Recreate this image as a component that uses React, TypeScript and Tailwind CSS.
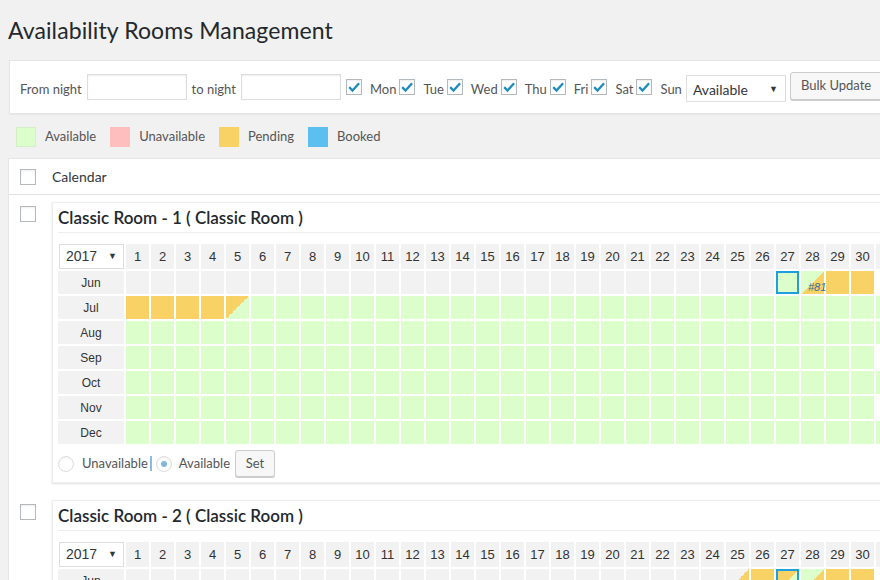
import { ReactNode } from "react";

type Cell = "past" | "free" | "pend" | "pf" | "fp" | "gp" | "none";

const cellBg: Record<Cell, string> = {
  past: "bg-[#f2f2f2]",
  free: "bg-[#dcfecb]",
  pend: "bg-[#f9d265]",
  pf: "bg-[linear-gradient(to_bottom_right,#f9d265_50%,#dcfecb_50%)]",
  fp: "bg-[linear-gradient(to_bottom_right,#dcfecb_50%,#f9d265_50%)]",
  gp: "bg-[linear-gradient(to_bottom_right,#f2f2f2_50%,#f9d265_50%)]",
  none: "bg-white",
};

const months: [string, number][] = [
  ["Jun", 30],
  ["Jul", 31],
  ["Aug", 31],
  ["Sep", 30],
  ["Oct", 31],
  ["Nov", 30],
  ["Dec", 31],
];

const days = Array.from({ length: 31 }, (_, i) => i + 1);

type Special = { type: Cell; today?: boolean; label?: string };

const room1: Record<string, Record<number, Special>> = {
  Jun: {
    27: { type: "free", today: true },
    28: { type: "fp", label: "#81" },
    29: { type: "pend" },
    30: { type: "pend" },
  },
  Jul: {
    1: { type: "pend" },
    2: { type: "pend" },
    3: { type: "pend" },
    4: { type: "pend" },
    5: { type: "pf" },
  },
};

const room2: Record<string, Record<number, Special>> = {
  Jun: {
    25: { type: "gp", label: "#80" },
    26: { type: "pend" },
    27: { type: "pf", today: true },
    28: { type: "fp", label: "#82" },
    29: { type: "pend" },
    30: { type: "pend" },
  },
  Jul: {
    1: { type: "pend" },
    2: { type: "pend" },
    3: { type: "pf" },
  },
};

const Checkbox = ({ checked }: { checked?: boolean }) => (
  <span className="w-4 h-4 shrink-0 border border-[#b4b9be] bg-white shadow-[inset_0_1px_2px_rgba(0,0,0,0.07)] flex items-center justify-center">
    {checked && (
      <svg width="14" height="14" viewBox="0 0 16 16">
        <path d="M2.5 8.2 L6.3 12 L13.8 3.6" fill="none" stroke="#1e8cbe" strokeWidth="2.6" />
      </svg>
    )}
  </span>
);

const Radio = ({ checked }: { checked?: boolean }) => (
  <span className="w-4 h-4 rounded-full border border-[#dcdcdc] bg-white shadow-[inset_0_1px_2px_rgba(0,0,0,0.06)] flex items-center justify-center">
    {checked && <span className="w-[6px] h-[6px] rounded-full bg-[#7eb9d8]" />}
  </span>
);

const Grid = ({ data }: { data: Record<string, Record<number, Special>> }) => (
  <div className="grid grid-cols-[66px_repeat(31,23px)] grid-rows-[25px_repeat(7,23px)] gap-[2px] font-['Liberation_Sans',Arial,sans-serif] text-[13px] text-[#333]">
    <div className="ml-[1px] h-[25px] bg-white border border-[#ddd] flex items-center justify-between pl-[6px] pr-[6px] text-[14px] text-[#32373c]">
      <span>2017</span>
      <span className="text-[9px]">▼</span>
    </div>
    {days.map((d) => (
      <div key={d} className="bg-[#f2f2f2] flex items-center justify-center">
        {d}
      </div>
    ))}
    {months.map(([m, len]) => {
      const row = data[m] || {};
      return [
        <div key={m} className="bg-[#f2f2f2] flex items-center justify-center text-[12px]">
          {m}
        </div>,
        ...days.map((d) => {
          const sp = row[d];
          let type: Cell = m === "Jun" ? "past" : "free";
          if (d > len) type = "none";
          if (sp) type = sp.type;
          return (
            <div
              key={m + d}
              className={`relative ${cellBg[type]} ${sp?.today ? "border-2 border-[#1e9fe0]" : ""}`}
            >
              {sp?.label && (
                <span className="absolute left-[7px] top-[8px] text-[11px] italic text-[#2f6f9c] whitespace-nowrap">
                  {sp.label}
                </span>
              )}
            </div>
          );
        }),
      ];
    })}
  </div>
);

const RoomRow = ({
  title,
  data,
}: {
  title: string;
  data: Record<string, Record<number, Special>>;
}) => (
  <div className="flex pt-[7px] pb-[10px]">
    <div className="w-[43px] shrink-0 pl-[11px] pt-[4px]">
      <Checkbox />
    </div>
    <div className="flex-1 bg-white shadow-[0_1px_2px_rgba(0,0,0,0.12)] border border-[#eee] px-[5px] pt-[4px] pb-[5px]">
      <div className="text-[17px] leading-[22px] font-semibold text-[#23282d] pb-[3px] border-b border-[#eee]">
        {title}
      </div>
      <div className="mt-[11px]">
        <Grid data={data} />
      </div>
      <div className="flex items-center mt-[6px] text-[13px] text-[#555]">
        <Radio />
        <span className="ml-[8px]">Unavailable</span>
        <span className="ml-[2px] w-[2px] h-[15px] bg-[#8cbbe0]" />
        <span className="ml-[4px]">
          <Radio checked />
        </span>
        <span className="ml-[7px]">Available</span>
        <button className="ml-[5px] h-[27px] w-[40px] bg-[#f7f7f7] border border-[#ccc] rounded-[3px] shadow-[0_1px_0_#ccc] text-[13px] text-[#555]">
          Set
        </button>
      </div>
    </div>
  </div>
);

const Legend = ({ color, children }: { color: string; children: ReactNode }) => (
  <div className="flex items-center mr-[14px]">
    <span className={`w-5 h-5 ${color}`} />
    <span className="ml-[9px]">{children}</span>
  </div>
);

const dayNames = ["Mon", "Tue", "Wed", "Thu", "Fri", "Sat", "Sun"];

export default function App() {
  return (
    <div className="w-[880px] h-[580px] overflow-hidden bg-[#f1f1f1] font-['Lato','Noto_Sans',sans-serif] text-[#444]">
      <div className="pl-[8px] pt-[16px] w-[920px]">
        <h1 className="text-[23px] leading-[29px] text-[#23282d] font-normal tracking-[0.1px]">
          Availability Rooms Management
        </h1>

        <div className="mt-[15px] ml-[1px] h-[54px] bg-white border border-[#e5e5e5] shadow-[0_1px_1px_rgba(0,0,0,0.04)] flex items-center pl-[10px] text-[13px] text-[#555]">
          <span className="pt-[5px]">From night</span>
          <input className="ml-[5px] w-[100px] h-[26px] border border-[#ddd] bg-white shadow-[inset_0_1px_2px_rgba(0,0,0,0.07)]" />
          <span className="ml-[5px] pt-[5px]">to night</span>
          <input className="ml-[5px] w-[100px] h-[26px] border border-[#ddd] bg-white shadow-[inset_0_1px_2px_rgba(0,0,0,0.07)]" />
          <div className="flex items-center ml-[5px]">
            {dayNames.map((d) => (
              <div key={d} className="flex items-center">
                <Checkbox checked />
                <span className="ml-[8px] mr-[3px] pt-[5px]">{d}</span>
              </div>
            ))}
          </div>
          <div className="ml-[1px] mt-[3px] w-[100px] h-[27px] border border-[#ddd] bg-white flex items-center justify-between pl-[6px] pr-[7px] text-[14px] text-[#32373c]">
            <span className="pt-[2px]">Available</span>
            <span className="text-[9px]">▼</span>
          </div>
          <button className="ml-[4px] -mt-[3px] h-[28px] px-[10px] bg-[#f7f7f7] border border-[#ccc] rounded-[3px] shadow-[0_1px_0_#ccc] text-[13px] text-[#555]">
            Bulk Update
          </button>
        </div>

        <div className="flex items-center mt-[13px] ml-[8px] h-[20px] text-[13px] text-[#555]">
          <Legend color="bg-[#dcfecb] border border-[#d4ecc8]">Available</Legend>
          <Legend color="bg-[#ffbebe]">Unavailable</Legend>
          <Legend color="bg-[#f9d265]">Pending</Legend>
          <Legend color="bg-[#5bc0f0]">Booked</Legend>
        </div>

        <div className="mt-[11px] bg-white border border-[#e5e5e5]">
          <div className="h-[36px] border-b border-[#e1e1e1] flex items-center">
            <div className="w-[43px] pl-[11px]">
              <Checkbox />
            </div>
            <span className="text-[14px] text-[#32373c]">Calendar</span>
          </div>
          <RoomRow title="Classic Room - 1 ( Classic Room )" data={room1} />
          <RoomRow title="Classic Room - 2 ( Classic Room )" data={room2} />
        </div>
      </div>
    </div>
  );
}
